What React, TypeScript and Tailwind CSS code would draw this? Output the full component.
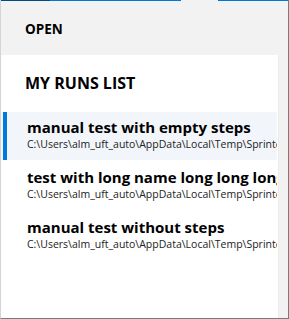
import React from "react";

const items = [
  { title: "manual test with empty steps", selected: true },
  { title: "test with long name long long long long name", selected: false },
  { title: "manual test without steps", selected: false },
];

const path = "C:\\Users\\alm_uft_auto\\AppData\\Local\\Temp\\SprinterRuns\\manual";

export default function App() {
  return (
    <div
      className="w-[289px] h-[319px] flex flex-col bg-[#f2f2f2] border-l border-l-[#d4d4d4] border-r border-r-[#7a7a7a] border-b border-b-[#7a7a7a] overflow-hidden"
      style={{ fontFamily: '"Open Sans", "Noto Sans", sans-serif' }}
    >
      <div className="flex h-px shrink-0">
        <div className="w-[49px] bg-[#004c87]" />
        <div className="w-[131px] bg-[#0078d7]" />
        <div className="w-[37px] bg-[#f2f2f2]" />
        <div className="flex-1 bg-[#0078d7]" />
      </div>
      <div className="h-[54px] shrink-0 pl-[24px] pt-[15px]">
        <span className="text-[13.5px] font-bold text-black leading-[20px]">OPEN</span>
      </div>
      <div className="flex-1 flex min-h-0">
        <div className="w-[277px] bg-white flex flex-col overflow-hidden">
          <div className="pl-[24px] pt-[16px] h-[57px] text-[16px] font-bold text-black leading-[24px] whitespace-nowrap">
            MY RUNS LIST
          </div>
          <div className="flex flex-col gap-[2px] pr-[1px]">
            {items.map((it) => (
              <div
                key={it.title}
                className={
                  "flex h-[48px] " + (it.selected ? "bg-[#f2f6fb]" : "bg-white")
                }
              >
                <div className={"w-[4px] ml-[2px] " + (it.selected ? "bg-[#0078d7]" : "")} />
                <div className="flex-1 min-w-0 pl-[20px] pt-[6px] overflow-hidden">
                  <div className="text-[15px] font-bold text-black leading-[19px] whitespace-nowrap">
                    {it.title}
                  </div>
                  <div className="text-[10.5px] text-[#222] leading-[14px] whitespace-nowrap">
                    {path}
                  </div>
                </div>
              </div>
            ))}
          </div>
        </div>
        <div className="flex-1 bg-[#f2f2f2] border-l border-l-[#ececec]" />
      </div>
    </div>
  );
}
